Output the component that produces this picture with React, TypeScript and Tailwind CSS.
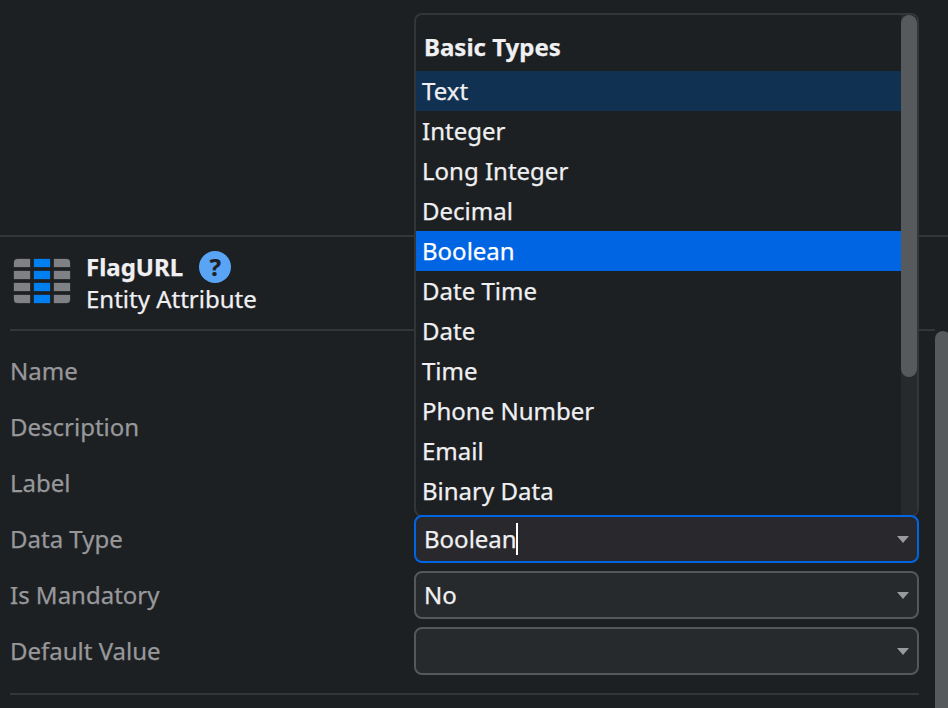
import React from 'react';

const basicTypes = [
  'Text',
  'Integer',
  'Long Integer',
  'Decimal',
  'Boolean',
  'Date Time',
  'Date',
  'Time',
  'Phone Number',
  'Email',
  'Binary Data',
];

function rowBackground(name: string) {
  if (name === 'Text') return 'bg-[#113153]';
  if (name === 'Boolean') return 'bg-[#0065e3] text-white';
  return '';
}

function TypeMenu() {
  return (
    <div className="absolute left-[414px] top-[13px] flex h-[504px] w-[505px] overflow-hidden rounded-lg border-2 border-[#333539] bg-[#1d2023]">
      <div className="flex-1">
        <div className="flex h-14 items-center pl-2 pt-2 font-bold">Basic Types</div>
        {basicTypes.map((name) => (
          <div key={name} className={`flex h-10 items-center pl-1.5 ${rowBackground(name)}`}>
            {name}
          </div>
        ))}
      </div>
      <div className="w-4 bg-[#272a2d]">
        <div className="h-[362px] rounded-full bg-[#565a5c]" />
      </div>
    </div>
  );
}

function EntityIcon() {
  return (
    <svg width="58" height="46" viewBox="0 0 58 46" className="shrink-0">
      <g transform="translate(.5 .5)" strokeOpacity=".4" strokeWidth=".7">
        <g fill="#808185" stroke="#808185">
          <path d="M4 .5H16.5V8.5H.5V4Q.5 .5 4 .5ZM.5 12.5H16.5V20.5H.5ZM.5 24.5H16.5V32.5H.5ZM.5 36.5H16.5V44.5H4Q.5 44.5 .5 41Z" />
          <path d="M40.5 .5H53Q56.5 .5 56.5 4V8.5H40.5ZM40.5 12.5H56.5V20.5H40.5ZM40.5 24.5H56.5V32.5H40.5ZM40.5 36.5H56.5V41Q56.5 44.5 53 44.5H40.5Z" />
        </g>
        <path fill="#0080f0" stroke="#0080f0" d="M20.5 .5H36.5V8.5H20.5ZM20.5 12.5H36.5V20.5H20.5ZM20.5 24.5H36.5V32.5H20.5ZM20.5 36.5H36.5V44.5H20.5Z" />
      </g>
    </svg>
  );
}

function SelectField({ value, focused = false }: { value: string; focused?: boolean }) {
  return (
    <div
      className={`flex h-12 w-[505px] items-center rounded-lg border-2 px-2 ${
        focused ? 'relative z-10 border-[#0065e3] bg-[#29292d]' : 'border-[#55585a] bg-[#272a2d]'
      }`}
    >
      <span>{value}</span>
      {focused && <span className="-ml-px h-8 w-0.5 bg-white" />}
      <svg className="ml-auto" width="12" height="7" viewBox="0 0 12 7">
        <path d="M0 0H12L6 7Z" fill="#9a9a9e" />
      </svg>
    </div>
  );
}

function Row({ label, children }: { label: string; children?: React.ReactNode }) {
  return (
    <div className="flex h-14 items-center">
      <div className="w-[404px] text-[#98989b]">{label}</div>
      {children}
    </div>
  );
}

export default function App() {
  return (
    <div className="relative flex h-[708px] w-[948px] flex-col overflow-hidden bg-[#1d2023] font-['Noto_Sans',sans-serif] text-2xl leading-8 text-[#f0f0f2] [-webkit-text-stroke:0.25px]">
      <div className="h-[235px] shrink-0" />
      <div className="h-[94px] shrink-0 border-t-2 border-[#333539]">
        <div className="flex pl-[13px] pt-[14px]">
          <div className="pt-[7px]">
            <EntityIcon />
          </div>
          <div className="pl-[15px]">
            <div className="flex h-8 items-center">
              <span className="font-bold">FlagURL</span>
              <span className="ml-4 flex size-8 items-center justify-center rounded-full bg-[#5aa4f5] font-bold text-[#1d2023]">?</span>
            </div>
            <div>Entity Attribute</div>
          </div>
        </div>
      </div>
      <div className="flex min-h-0 flex-1">
        <div className="ml-2.5 w-[925px] shrink-0 border-t-2 border-[#333539] pt-3">
          <Row label="Name" />
          <Row label="Description" />
          <Row label="Label" />
          <Row label="Data Type"><SelectField value="Boolean" focused /></Row>
          <Row label="Is Mandatory"><SelectField value="No" /></Row>
          <Row label="Default Value"><SelectField value="" /></Row>
          <div className="mt-3.5 w-[909px] border-t-2 border-[#333539]" />
        </div>
        <div className="mt-0.5 w-4 shrink-0 rounded-t-full bg-[#565a5c]" />
      </div>
      <TypeMenu />
    </div>
  );
}
